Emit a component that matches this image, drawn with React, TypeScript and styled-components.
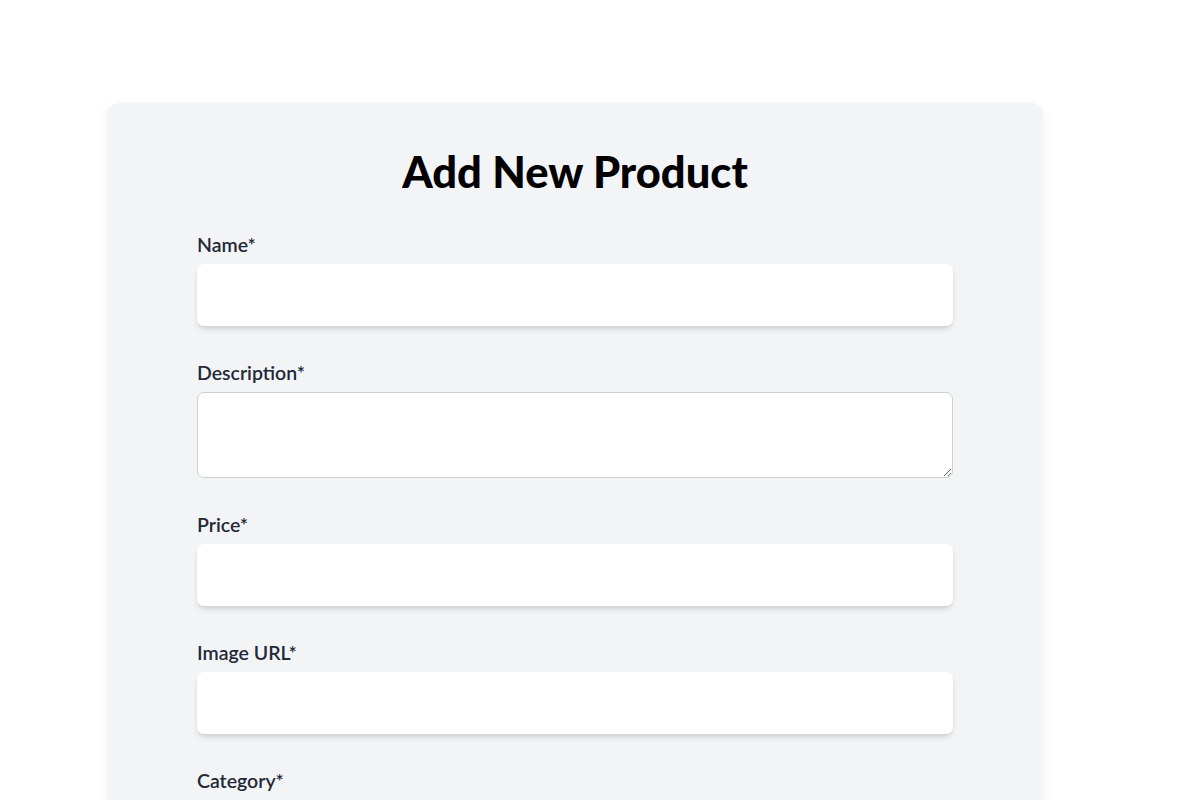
import React from "react";
import styled, { createGlobalStyle } from "styled-components";

const GlobalStyle = createGlobalStyle`
  html, body { margin: 0; padding: 0; background: #ffffff; }
  body { font-family: "Lato", "Noto Sans", sans-serif; }
  * { box-sizing: border-box; }
`;

const Page = styled.div`
  padding-top: 103px;
  padding-left: 107px;
`;

const Card = styled.div`
  width: 936px;
  background: #f3f4f6;
  border-radius: 12px;
  box-shadow: 0 4px 14px rgba(0, 0, 0, 0.06);
  padding: 40px 90px 40px;
`;

const Title = styled.h1`
  margin: 0 0 36px;
  text-align: center;
  font-family: "Lato", sans-serif;
  font-weight: 900;
  font-size: 43.5px;
  line-height: 56px;
  color: #000000;
`;

const Form = styled.form`
  display: flex;
  flex-direction: column;
`;

const Field = styled.div`
  display: flex;
  flex-direction: column;
  margin-bottom: 37px;
`;

const Label = styled.label`
  font-family: "Lato", sans-serif;
  font-weight: 600;
  font-size: 19.5px;
  line-height: 20px;
  color: #1f2937;
  margin-bottom: 9px;
`;

const Input = styled.input`
  height: 62px;
  width: 100%;
  border: none;
  border-radius: 7px;
  background: #ffffff;
  box-shadow: 0 4px 6px -1px rgba(0, 0, 0, 0.12), 0 2px 4px -2px rgba(0, 0, 0, 0.1);
  padding: 0 14px;
  font-size: 16px;
  outline: none;
`;

const TextArea = styled.textarea`
  height: 86px;
  width: 100%;
  border: 1px solid #cbd0d6;
  border-radius: 7px;
  background: #ffffff;
  padding: 10px 14px;
  font-size: 16px;
  outline: none;
  display: block;
`;

export default function App() {
  return (
    <>
      <GlobalStyle />
      <Page>
        <Card>
          <Title>Add New Product</Title>
          <Form>
            <Field>
              <Label>Name*</Label>
              <Input type="text" />
            </Field>
            <Field>
              <Label>Description*</Label>
              <TextArea />
            </Field>
            <Field>
              <Label>Price*</Label>
              <Input type="number" />
            </Field>
            <Field>
              <Label>Image URL*</Label>
              <Input type="text" />
            </Field>
            <Field>
              <Label>Category*</Label>
              <Input type="text" />
            </Field>
          </Form>
        </Card>
      </Page>
    </>
  );
}
